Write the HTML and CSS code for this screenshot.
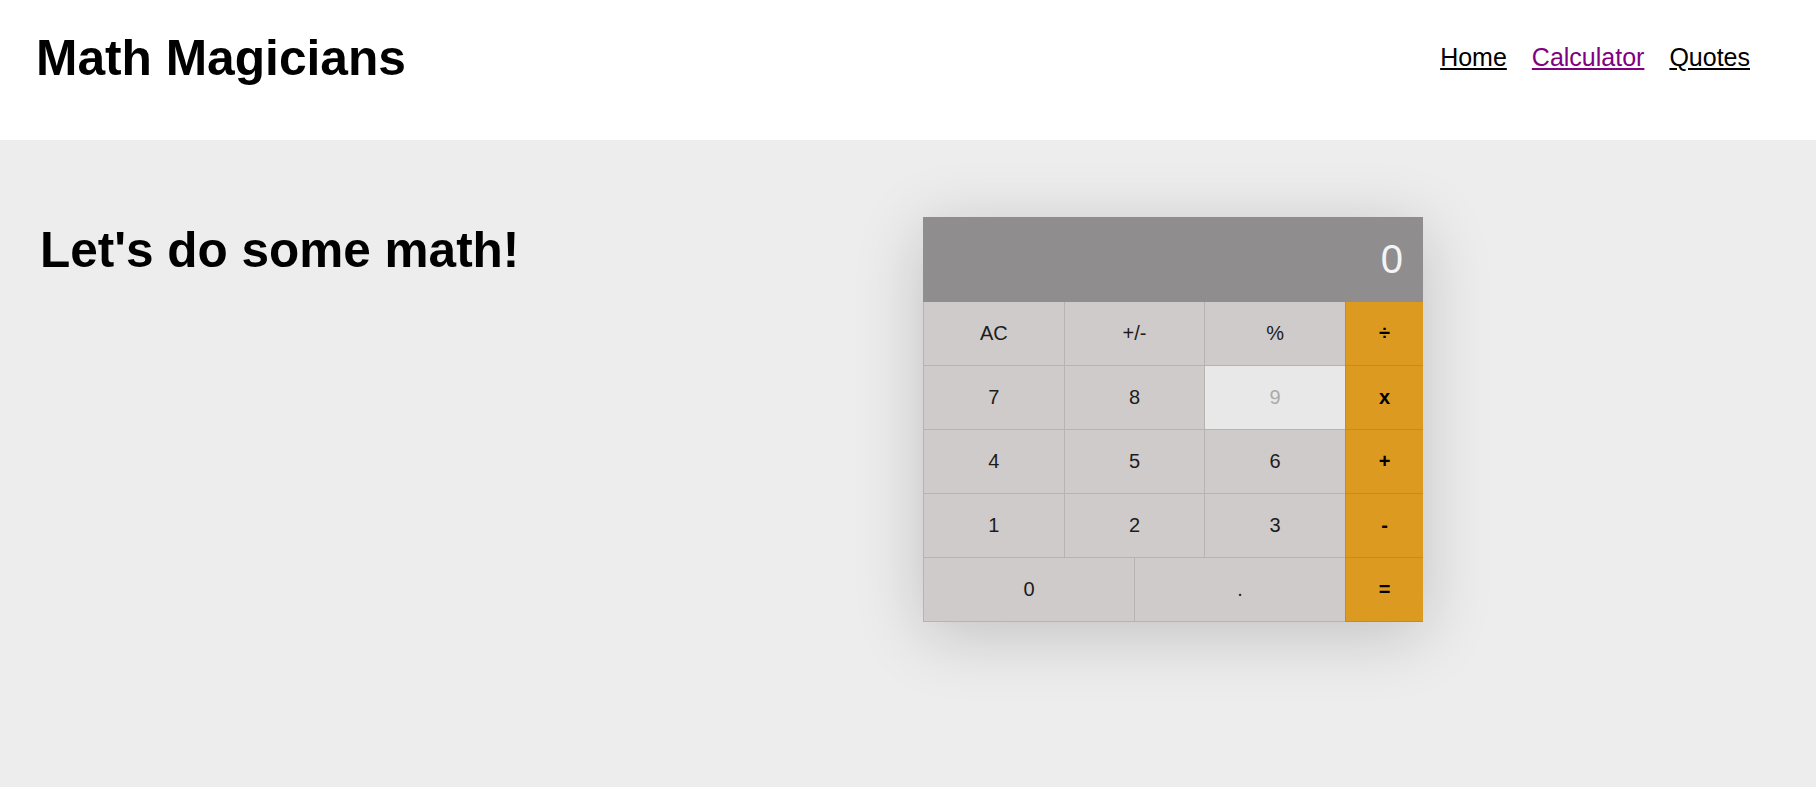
FILE: index.html
```html
<!DOCTYPE html>
<html lang="en">
<head>
<meta charset="utf-8">
<title>Math Magicians</title>
<link rel="stylesheet" href="styles.css">
</head>
<body>
<header class="site-header">
  <h1 class="logo">Math Magicians</h1>
  <nav class="nav">
    <a class="nav-link" href="#home">Home</a>
    <a class="nav-link nav-link-visited" href="#calculator">Calculator</a>
    <a class="nav-link" href="#quotes">Quotes</a>
  </nav>
</header>
<main class="page">
  <section class="intro">
    <h2 class="intro-title">Let's do some math!</h2>
  </section>
  <div class="calculator">
    <div class="display">0</div>
    <div class="keys">
      <button class="key">AC</button>
      <button class="key">+/-</button>
      <button class="key">%</button>
      <button class="key key-op">÷</button>
      <button class="key">7</button>
      <button class="key">8</button>
      <button class="key key-hover">9</button>
      <button class="key key-op">x</button>
      <button class="key">4</button>
      <button class="key">5</button>
      <button class="key">6</button>
      <button class="key key-op">+</button>
      <button class="key">1</button>
      <button class="key">2</button>
      <button class="key">3</button>
      <button class="key key-op">-</button>
      <button class="key key-wide">0</button>
      <button class="key key-wide">.</button>
      <button class="key key-op">=</button>
    </div>
  </div>
</main>
</body>
</html>
```

FILE: styles.css
```css
* {
  box-sizing: border-box;
}

html, body {
  margin: 0;
  padding: 0;
  height: 100%;
}

body {
  font-family: "Liberation Sans", Arial, sans-serif;
  background: #ededed;
  color: #000;
}

.site-header {
  background: #fff;
  height: 140px;
  display: flex;
  align-items: center;
  justify-content: space-between;
  padding: 0 66px 0 36px;
}

.logo {
  margin: 0 0 22px 0;
  font-size: 49.7px;
  font-weight: bold;
  line-height: 1;
}

.nav {
  display: flex;
  gap: 25px;
  margin-bottom: 26px;
}

.nav-link {
  font-size: 25px;
  color: #000;
  text-decoration: underline;
}

.nav-link-visited {
  color: #800080;
}

.page {
  display: flex;
  align-items: flex-start;
  padding: 77px 0 0 40px;
}

.intro {
  flex: 0 0 883px;
}

.intro-title {
  margin: 3px 0 0 0;
  font-size: 49.5px;
  font-weight: bold;
  line-height: 1.2;
}

.calculator {
  width: 500px;
  box-shadow: 0 12px 64px rgba(0, 0, 0, 0.19);
}

.display {
  height: 85px;
  background: #8f8d8d;
  color: #f4f4f4;
  font-size: 40px;
  display: flex;
  align-items: center;
  justify-content: flex-end;
  padding-right: 20px;
}

.keys {
  display: grid;
  grid-template-columns: repeat(6, 70.33px) 78px;
  grid-auto-rows: 64px;
}

.key {
  grid-column: span 2;
  border: 0;
  border-left: 1px solid #b7b3b2;
  border-bottom: 1px solid #b7b3b2;
  background: #cfcbca;
  font-family: "Liberation Sans", Arial, sans-serif;
  font-size: 20px;
  color: #1c1c1c;
  padding: 0;
  margin: 0;
}

.key-wide {
  grid-column: span 3;
}

.key-hover {
  background: #e8e8e8;
  color: #ababab;
}

.key-op {
  grid-column: span 1;
  background: #dc9a20;
  border-left: 1px solid #9a9080;
  border-bottom: 1px solid #9a9080;
  font-weight: bold;
  color: #000;
}
```
